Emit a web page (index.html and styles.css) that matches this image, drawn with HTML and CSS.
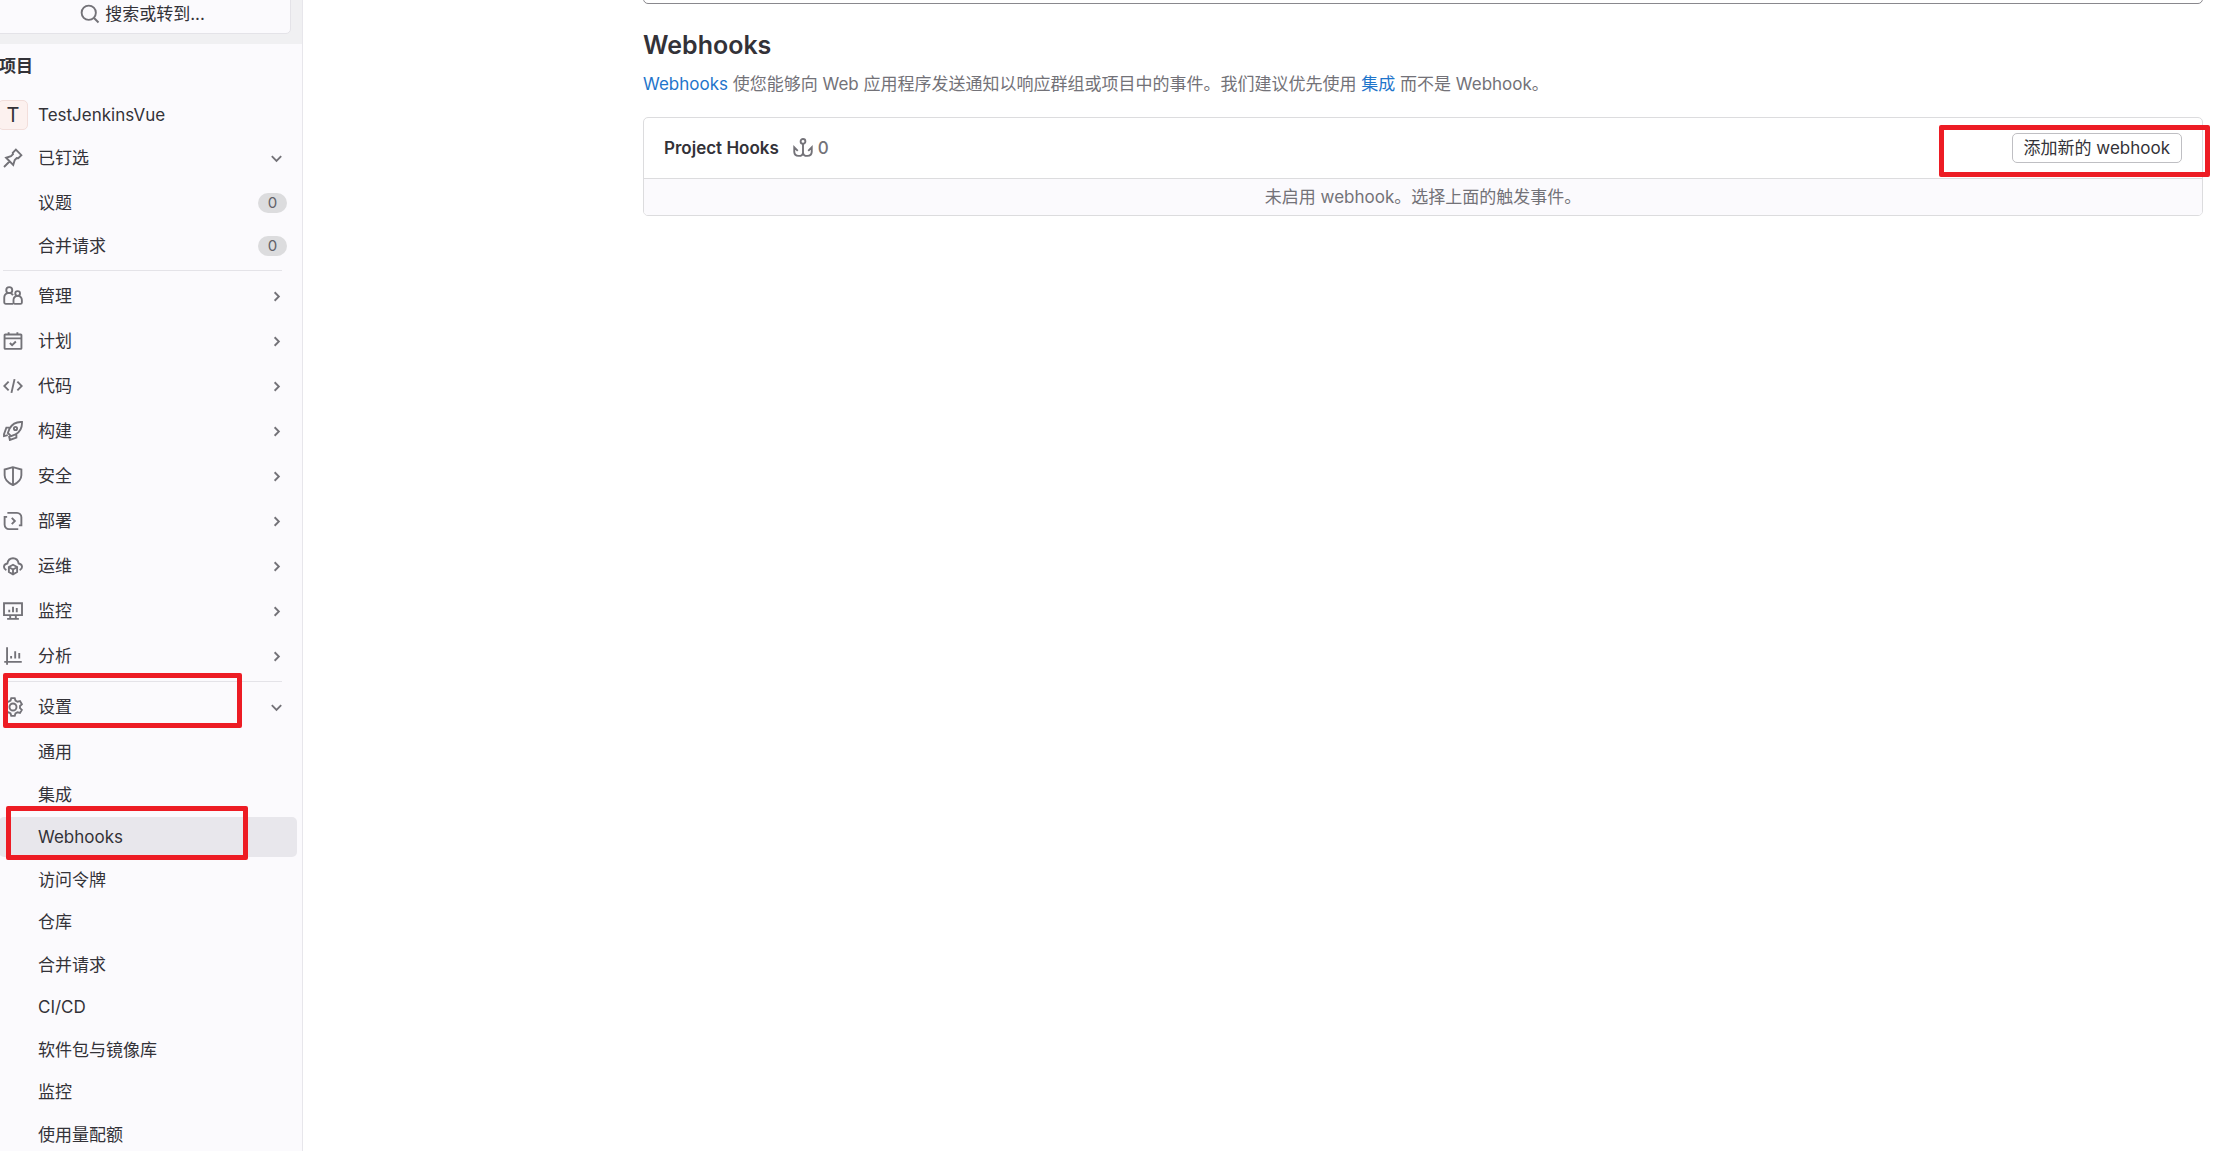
FILE: index.html
```html
<!DOCTYPE html>
<html lang="zh-CN">
<head>
<meta charset="utf-8">
<title>Webhooks · TestJenkinsVue</title>
<link rel="stylesheet" href="styles.css">
</head>
<body>
<svg class="defs" aria-hidden="true">
  <symbol id="right" viewBox="0 0 16 16"><path d="M6 3.5 10.5 8 6 12.5"/></symbol>
  <symbol id="down" viewBox="0 0 16 16"><path d="M3 5.500 8 10.500 13 5.500"/></symbol>
</svg>
<div class="shell">
  <aside class="sidebar">
    <div class="topbar">
      <button class="search" type="button">
        <svg class="icon" viewBox="0 0 16 16"><circle cx="7" cy="7" r="5.7"/><path d="m11.200 11.200 3.600 3.600"/></svg>
        <span>搜索或转到...</span>
      </button>
    </div>
    <nav class="nav" aria-label="项目">
      <h2 class="nav-title">项目</h2>
      <a class="row project" href="#"><span class="avatar">T</span><span class="label">TestJenkinsVue</span></a>
      <button class="row pinned" type="button"><svg class="icon" viewBox="0 0 16 16"><path d="M.8 15.200 5.600 10.400M2.500 7.800l5.700 5.700 1.200-3.900 1.600-1.600 1.200.2 2.500-2.500L10.300 1.300 7.800 3.800 8 5 6.400 6.600z"/></svg><span class="label">已钉选</span><svg class="chevron"><use href="#down"/></svg></button>
      <ul class="sub">
        <li><a class="row" href="#"><span class="label">议题</span><span class="badge">0</span></a></li>
        <li><a class="row" href="#"><span class="label">合并请求</span><span class="badge">0</span></a></li>
      </ul>
      <ul class="groups">
        <li><button class="row" type="button"><svg class="icon" viewBox="0 0 16 16"><circle cx="5" cy="3.300" r="2.400"/><path d="M8 14.250H2.200a1.200 1.200 0 0 1-1.200-1.200V9.400a3.800 3.800 0 0 1 7-2.100"/><circle cx="11.700" cy="6" r="1.900"/><path d="M11.700 7.900a3.200 3.200 0 0 0-3.300 3.200v2a1.150 1.150 0 0 0 1.150 1.150h4.400a1.150 1.150 0 0 0 1.150-1.150v-2a3.200 3.200 0 0 0-3.400-3.200z"/></svg><span class="label">管理</span><svg class="chevron"><use href="#right"/></svg></button></li>
        <li><button class="row" type="button"><svg class="icon" viewBox="0 0 16 16"><rect x="1.250" y="2.750" width="13.500" height="11.500" rx=".5"/><path d="M1.250 5.900h13.500M4.500 1v1.500M11.500 1v1.500M5.500 9.600l1.800 1.800 3-3"/></svg><span class="label">计划</span><svg class="chevron"><use href="#right"/></svg></button></li>
        <li><button class="row" type="button"><svg class="icon" viewBox="0 0 16 16"><path d="M4.500 4.500 1 8l3.500 3.500M11.500 4.500 15 8l-3.500 3.500M9.250 2.500 6.750 13.500"/></svg><span class="label">代码</span><svg class="chevron"><use href="#right"/></svg></button></li>
        <li><button class="row" type="button"><svg class="icon" viewBox="0 0 16 16"><path d="M15.200.8c-4.400-.3-7.700 1.200-9.900 5.200L3.900 9.600l2.500 2.500L10 10.700c4-2.200 5.400-5.500 5.200-9.900zM5.500 5.300H2.700L.8 10.500v1.600l3-.8M10.700 10.500v2.800l-5.200 1.900-.7-3.200"/><circle cx="10" cy="6" r="1.300"/></svg><span class="label">构建</span><svg class="chevron"><use href="#right"/></svg></button></li>
        <li><button class="row" type="button"><svg class="icon" viewBox="0 0 16 16"><path d="M8 .9 1.300 2.800v4.500c0 3.600 2.700 6 6.700 8 4-2 6.700-4.400 6.700-8V2.800zM8 1v14"/></svg><span class="label">安全</span><svg class="chevron"><use href="#right"/></svg></button></li>
        <li><button class="row" type="button"><svg class="icon" viewBox="0 0 16 16"><path d="M3.500 1.500h7.700a3.500 3.500 0 0 1 3.500 3.500v6.500h-2M12.200 14.500H4.800A3.500 3.500 0 0 1 1.300 11V4.700h2M7 5.500 9.500 8 7 10.500"/></svg><span class="label">部署</span><svg class="chevron"><use href="#right"/></svg></button></li>
        <li><button class="row" type="button"><svg class="icon" viewBox="0 0 16 16"><path d="M2.700 11.300C-.1 10 .2 6.500 3.500 6 3.900 3.300 5.700 1.750 8 1.750S12.100 3.300 12.500 6c3.300.5 3.600 4 .8 5.300"/><path d="M8 7l3.300 1.800v4L8 14.700l-3.300-1.900v-4zM4.900 9 8 10.800 11.100 9M8 10.800v3.700"/></svg><span class="label">运维</span><svg class="chevron"><use href="#right"/></svg></button></li>
        <li><button class="row" type="button"><svg class="icon" viewBox="0 0 16 16"><path d="M.8 1.750h14.400v9.500H.8zM5.750 11.500v2.500M10.250 11.500v2.500M3.300 14.250h9.400M5 7V9M8 4.500V9M11 5.500V9"/></svg><span class="label">监控</span><svg class="chevron"><use href="#right"/></svg></button></li>
        <li><button class="row" type="button"><svg class="icon" viewBox="0 0 16 16"><path d="M3.250 1v14M1 12.700h14M6.500 8v2M9.750 4.200V10M13 5.500V10"/></svg><span class="label">分析</span><svg class="chevron"><use href="#right"/></svg></button></li>
      </ul>
      <div class="marked">
        <button class="row" type="button"><svg class="icon" viewBox="0 0 16 16"><path d="M6.600.9h2.800l.6 2 1.600.9 2-.5 1.500 2.500L13.600 7.200v1.700l1.500 1.400-1.500 2.400-2-.5-1.600.9-.6 2H6.600l-.6-2-1.600-.9-2 .5L.9 10.300l1.500-1.400V7.200L.9 5.800l1.500-2.500 2 .5L6 2.900z"/><circle cx="8" cy="8" r="2.800"/></svg><span class="label">设置</span><svg class="chevron"><use href="#down"/></svg></button>
        <span class="frame frame-settings"></span>
      </div>
      <ul class="sub">
        <li><a class="row" href="#"><span class="label">通用</span></a></li>
        <li><a class="row" href="#"><span class="label">集成</span></a></li>
        <li class="marked"><a class="row current" href="#" aria-current="page"><span class="label">Webhooks</span></a><span class="frame frame-hooks"></span></li>
        <li><a class="row" href="#"><span class="label">访问令牌</span></a></li>
        <li><a class="row" href="#"><span class="label">仓库</span></a></li>
        <li><a class="row" href="#"><span class="label">合并请求</span></a></li>
        <li><a class="row" href="#"><span class="label">CI/CD</span></a></li>
        <li><a class="row" href="#"><span class="label">软件包与镜像库</span></a></li>
        <li><a class="row" href="#"><span class="label">监控</span></a></li>
        <li><a class="row" href="#"><span class="label">使用量配额</span></a></li>
      </ul>
    </nav>
  </aside>
  <main class="main">
    <input class="filter" type="search" aria-label="搜索页面">
    <h1>Webhooks</h1>
    <p class="intro"><a href="#">Webhooks</a> 使您能够向 Web 应用程序发送通知以响应群组或项目中的事件。我们建议优先使用 <a href="#">集成</a> 而不是 Webhook。</p>
    <section class="card marked">
      <header class="card-head">
        <h3>Project Hooks</h3>
        <span class="count"><svg class="icon" viewBox="0 0 16 16"><circle cx="8" cy="2.700" r="1.900"/><path d="M8 4.600v8.200M1 11.500V7.500l2.800 2.800M15 11.500V7.500l-2.800 2.800M1 10.500c0 2.500 1.300 3.800 3.500 3.800 2 0 3.500-1 3.500-2.800 0 1.800 1.500 2.800 3.500 2.800 2.200 0 3.500-1.300 3.500-3.800"/></svg>0</span>
        <button class="add" type="button">添加新的 webhook</button>
      </header>
      <p class="empty">未启用 webhook。选择上面的触发事件。</p>
      <span class="frame frame-add"></span>
    </section>
  </main>
</div>
</body>
</html>
```
FILE: styles.css
```css
* { box-sizing: border-box; }

body {
  margin: 0;
  background: #fff;
  color: #333238;
  font: 17px/24px Inter, "Noto Sans CJK SC", sans-serif;
}

h1, h2, h3, p, ul { margin: 0; padding: 0; }
ul { list-style: none; }
a { color: #1f75cb; text-decoration: none; }
button { font: inherit; color: inherit; cursor: pointer; }

.defs { display: none; }

.icon, .chevron {
  flex: none;
  width: 20px;
  height: 20px;
  fill: none;
  stroke: #737278;
  stroke-width: 1.5;
}
.chevron { width: 15px; height: 15px; stroke-width: 2; }

.shell {
  display: flex;
  height: 100vh;
  overflow: hidden;
}

/* Sidebar */
.sidebar {
  flex: none;
  width: 303px;
  background: #fbfafd;
  border-right: 1px solid #e7e6eb;
}

.topbar {
  display: flex;
  height: 44px;
  background: #f0f0f2;
}
.search {
  display: flex;
  align-items: center;
  justify-content: center;
  gap: 5px;
  width: 297px;
  height: 41px;
  margin: -7px 0 0 -6px;
  background: #fbfafd;
  border: 1px solid #e4e3e8;
  border-radius: 5px;
}

.nav-title {
  padding: 10px 0;
  margin: 0 0 7px -1px;
  font-size: 17px;
  font-weight: 600;
  line-height: 24px;
}

.row {
  display: flex;
  align-items: center;
  gap: 15px;
  width: 298px;
  height: 40px;
  margin-left: -1px;
  padding: 0 13px 0 4px;
  border: 0;
  border-radius: 5px;
  background: none;
  color: #333238;
  text-align: left;
}
.label { flex: 1; }
.project { margin-bottom: 3px; padding-left: 0; gap: 10px; }
.avatar {
  flex: none;
  width: 30px;
  height: 30px;
  margin-left: -1px;
  border: 1px solid #f2dedb;
  border-radius: 5px;
  background: #fcf1ef;
  font-size: 20px;
  line-height: 28px;
  text-align: center;
}
.badge {
  min-width: 29px;
  margin-right: -3px;
  border-radius: 10px;
  background: #dcdcde;
  color: #626168;
  font-size: 15px;
  line-height: 20px;
  text-align: center;
}

.sub { display: grid; gap: 2px; margin-top: 5px; }
.sub li:nth-child(odd) { margin-bottom: 1px; }
.sub .row { padding-left: 39px; }
.current { background: #e8e7ec; }

.groups { display: grid; gap: 5px; margin-top: 4px; }
.groups::before, .groups::after {
  content: "";
  height: 1px;
  margin: 0 20px 0 3px;
  background: #e4e3e8;
}

.marked { position: relative; }
.nav > .marked { margin-top: 5px; }

.frame {
  position: absolute;
  border: 5px solid #ed1c24;
  border-radius: 2px;
  pointer-events: none;
}
.frame-settings { left: 3px; top: -14px; width: 239px; height: 55px; }
.frame-hooks { left: 6px; top: -11px; width: 242px; height: 54px; }
.frame-add { right: -8px; top: 7px; width: 271px; height: 52px; }

/* Main column */
.main {
  flex: 1;
  min-width: 0;
  padding: 0 34px 0 340px;
}
.filter {
  display: block;
  width: 100%;
  height: 40px;
  margin: -36px 0 0;
  border: 1px solid #89888d;
  border-radius: 5px;
  background: #fff;
}
h1 {
  margin-top: 25px;
  font-size: 25px;
  font-weight: 600;
  line-height: 32px;
}
.intro { margin-top: 11px; color: #737278; }

.card {
  margin-top: 21px;
  border: 1px solid #dcdcde;
  border-radius: 5px;
}
.card-head {
  display: flex;
  align-items: center;
  height: 61px;
  padding: 0 20px;
  border-bottom: 1px solid #dcdcde;
}
h3 { font-size: 17px; font-weight: 600; line-height: 24px; }
.count {
  display: flex;
  align-items: center;
  gap: 5px;
  margin-left: 14px;
  color: #737278;
  font-weight: 500;
}
.add {
  height: 30px;
  margin-left: auto;
  padding: 0 11px;
  border: 1px solid #bfbfc3;
  border-radius: 5px;
  background: #fff;
  line-height: 24px;
}
.empty {
  padding: 6px;
  border-radius: 0 0 4px 4px;
  background: #fbfafd;
  color: #737278;
  text-align: center;
}
```
